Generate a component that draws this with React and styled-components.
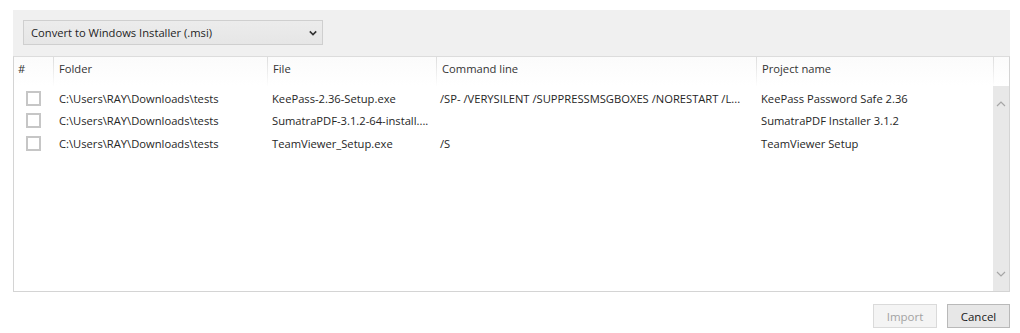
import React from "react";
import styled, { createGlobalStyle } from "styled-components";

const Global = createGlobalStyle`
  html, body { margin: 0; padding: 0; background: #ffffff; }
  body { font-family: "Open Sans", "Noto Sans", sans-serif; font-size: 11.2px; color: #222; }
  * { box-sizing: border-box; }
`;

const Window = styled.div`
  width: 1020px;
  height: 333px;
  padding: 10px 10px 0 13px;
  display: flex;
  flex-direction: column;
`;

const TopPanel = styled.div`
  height: 46px;
  background: #f0f0f0;
  padding: 10px 10px 0 10px;
  display: flex;
  align-items: flex-start;
`;

const Select = styled.div`
  width: 300px;
  height: 25px;
  border: 1px solid #cfcfcf;
  background: linear-gradient(#ececec, #e6e6e6);
  display: flex;
  align-items: center;
  justify-content: space-between;
  padding: 0 5px 0 7px;
  color: #1e1e1e;
`;

const Table = styled.div`
  height: 236px;
  border: 1px solid #d4d4d4;
  border-top: 1px solid #dcdcdc;
  display: flex;
  flex-direction: column;
  background: #fff;
`;

const COLS = "39px 214px 169px 320px 237px 16px";

const HeaderRow = styled.div`
  display: grid;
  grid-template-columns: ${COLS};
  height: 29px;
  background: linear-gradient(#fbfbfb, #ffffff);
`;

const HeaderCell = styled.div`
  padding: 4px 0 0 ${(p) => p.$pad || 5}px;
  color: #333;
  white-space: nowrap;
  border-left: ${(p) => (p.$sep ? "1px solid transparent" : "none")};
  border-image: ${(p) =>
    p.$sep ? "linear-gradient(#dcdcdc, rgba(220,220,220,0)) 1" : "none"};
`;

const Body = styled.div`
  flex: 1;
  display: grid;
  grid-template-columns: 979px 16px;
  min-height: 0;
`;

const Rows = styled.div`
  padding-top: 1px;
`;

const Row = styled.div`
  display: grid;
  grid-template-columns: 39px 214px 169px 320px 237px;
  height: 22.5px;
  align-items: center;
`;

const Cell = styled.div`
  padding-left: ${(p) => p.$pad ?? 5}px;
  white-space: nowrap;
  overflow: hidden;
  color: #262626;
`;

const CheckCell = styled.div`
  display: flex;
  padding-left: 12px;
  align-items: center;
`;

const Check = styled.span`
  width: 15px;
  height: 15px;
  border: 2px solid #c6c6c6;
  background: #fff;
  display: block;
`;

const Scrollbar = styled.div`
  background: #e8e8e8;
  display: flex;
  flex-direction: column;
  justify-content: space-between;
  align-items: center;
  padding: 15px 0 14px;
`;

const Footer = styled.div`
  display: flex;
  justify-content: flex-end;
  gap: 10px;
  padding-top: 12px;
`;

const Button = styled.button`
  width: ${(p) => p.$w || 63}px;
  height: 24px;
  font-family: inherit;
  font-size: 11.5px;
  padding: 0;
  border: 1px solid ${(p) => (p.disabled ? "#dadada" : "#b9b9b9")};
  background: ${(p) => (p.disabled ? "#f4f4f4" : "#e7e7e7")};
  color: ${(p) => (p.disabled ? "#a3a3a3" : "#1a1a1a")};
`;

const Chevron = ({ dir = "down", color = "#a6a6a6", w = 10, sw = 1.2 }) => (
  <svg width={w} height="6" viewBox="0 0 10 6">
    <polyline
      points={dir === "down" ? "1,1 5,5 9,1" : "1,5 5,1 9,5"}
      fill="none"
      stroke={color}
      strokeWidth={sw}
    />
  </svg>
);

const rows = [
  {
    folder: "C:\\Users\\RAY\\Downloads\\tests",
    file: "KeePass-2.36-Setup.exe",
    cmd: "/SP- /VERYSILENT /SUPPRESSMSGBOXES /NORESTART /L...",
    name: "KeePass Password Safe 2.36",
  },
  {
    folder: "C:\\Users\\RAY\\Downloads\\tests",
    file: "SumatraPDF-3.1.2-64-install....",
    cmd: "",
    name: "SumatraPDF Installer 3.1.2",
  },
  {
    folder: "C:\\Users\\RAY\\Downloads\\tests",
    file: "TeamViewer_Setup.exe",
    cmd: "/S",
    name: "TeamViewer Setup",
  },
];

export default function App() {
  return (
    <>
      <Global />
      <Window>
        <TopPanel>
          <Select>
            <span>Convert to Windows Installer (.msi)</span>
            <Chevron color="#333" w={8} sw={2} />
          </Select>
        </TopPanel>
        <Table>
          <HeaderRow>
            <HeaderCell $pad={4}>#</HeaderCell>
            <HeaderCell $sep>Folder</HeaderCell>
            <HeaderCell $sep>File</HeaderCell>
            <HeaderCell $sep>Command line</HeaderCell>
            <HeaderCell $sep>Project name</HeaderCell>
            <HeaderCell $sep />
          </HeaderRow>
          <Body>
            <Rows>
              {rows.map((r, i) => (
                <Row key={i}>
                  <CheckCell>
                    <Check />
                  </CheckCell>
                  <Cell $pad={6}>{r.folder}</Cell>
                  <Cell>{r.file}</Cell>
                  <Cell $pad={4}>{r.cmd}</Cell>
                  <Cell>{r.name}</Cell>
                </Row>
              ))}
            </Rows>
            <Scrollbar>
              <Chevron dir="up" />
              <Chevron dir="down" />
            </Scrollbar>
          </Body>
        </Table>
        <Footer>
          <Button disabled $w={64}>Import</Button>
          <Button $w={63}>Cancel</Button>
        </Footer>
      </Window>
    </>
  );
}
